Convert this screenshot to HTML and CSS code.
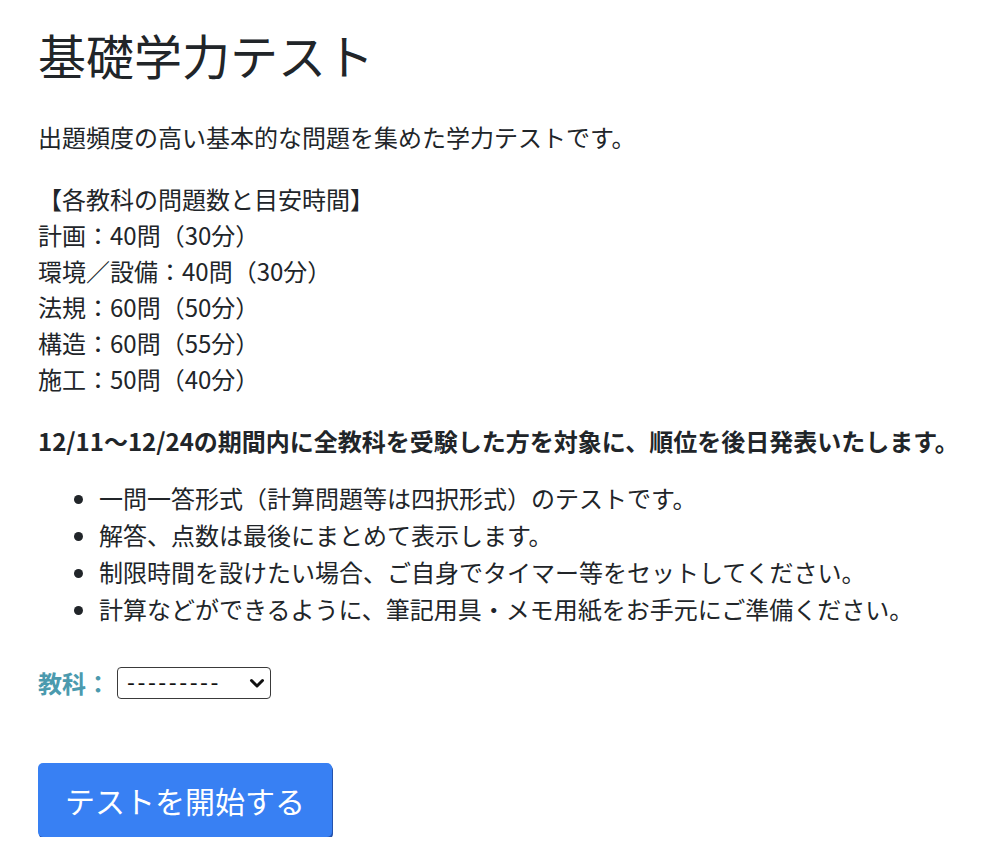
FILE: index.html
```html
<!DOCTYPE html>
<html lang="ja">
<head>
    <meta charset="UTF-8">
    <meta name="viewport" content="width=device-width, initial-scale=1.0">
    <title>基礎学力テスト</title>
    <link rel="stylesheet" href="styles.css">
</head>
<body>
    <div class="container">
        <h1 class="title">基礎学力テスト</h1>
        <p>出題頻度の高い基本的な問題を集めた学力テストです。</p>
        <p>
            【各教科の問題数と目安時間】<br>
            計画：40問（30分）<br>
            環境／設備：40問（30分）<br>
            法規：60問（50分）<br>
            構造：60問（55分）<br>
            施工：50問（40分）
        </p>
        <p class="notice">12/11〜12/24の期間内に全教科を受験した方を対象に、順位を後日発表いたします。</p>
        <ul class="rules">
            <li>一問一答形式（計算問題等は四択形式）のテストです。</li>
            <li>解答、点数は最後にまとめて表示します。</li>
            <li>制限時間を設けたい場合、ご自身でタイマー等をセットしてください。</li>
            <li>計算などができるように、筆記用具・メモ用紙をお手元にご準備ください。</li>
        </ul>
        <form class="start-form">
            <div class="field">
                <label for="subject" class="field-label">教科：</label>
                <div class="select-wrap">
                    <select id="subject" class="subject-select">
                        <option>---------</option>
                        <option>計画</option>
                        <option>環境／設備</option>
                        <option>法規</option>
                        <option>構造</option>
                        <option>施工</option>
                    </select>
                    <svg class="select-arrow" width="16" height="11" viewBox="0 0 16 11">
                        <path d="M2.5 2.5 L8 8 L13.5 2.5" fill="none" stroke="#111" stroke-width="3" stroke-linecap="round" stroke-linejoin="round"/>
                    </svg>
                </div>
            </div>
            <button type="button" class="start-button">テストを開始する</button>
        </form>
    </div>
</body>
</html>
```

FILE: styles.css
```css
body {
    margin: 0;
    background-color: #fff;
    color: #212529;
    font-family: "Noto Sans CJK JP", "Noto Sans", sans-serif;
    font-size: 24px;
    line-height: 1.5;
}

.container {
    padding: 26px 38px 0 38px;
}

.title {
    margin: 0 0 35px 0;
    font-size: 48px;
    font-weight: 400;
    line-height: 1.2;
}

p {
    margin: 0 0 26px 0;
}

.notice {
    font-weight: bold;
    margin-bottom: 20px;
}

.rules {
    margin: 0 0 38px 0;
    padding-left: 61px;
    line-height: 37px;
}

.field {
    display: flex;
    align-items: center;
}

.field-label {
    color: #4b9aae;
    font-weight: bold;
    margin-right: 7px;
}

.select-wrap {
    position: relative;
}

.subject-select {
    appearance: none;
    -webkit-appearance: none;
    display: block;
    width: 154px;
    height: 32px;
    padding: 0 0 0 9px;
    border: 1px solid #3a3a3a;
    border-radius: 4px;
    background-color: #fff;
    color: #111;
    font-family: "DejaVu Sans", sans-serif;
    font-size: 22px;
    letter-spacing: 2.5px;
}

.select-arrow {
    position: absolute;
    right: 6px;
    top: 11px;
    pointer-events: none;
}

.start-button {
    display: block;
    margin-top: 62px;
    width: 294px;
    height: 74px;
    padding: 0;
    border: none;
    border-radius: 5px;
    background-color: #3880f3;
    box-shadow: 1px 2px 0 #2452ad;
    color: #fff;
    font-family: "Noto Sans CJK JP", "Noto Sans", sans-serif;
    font-size: 30px;
}
```
